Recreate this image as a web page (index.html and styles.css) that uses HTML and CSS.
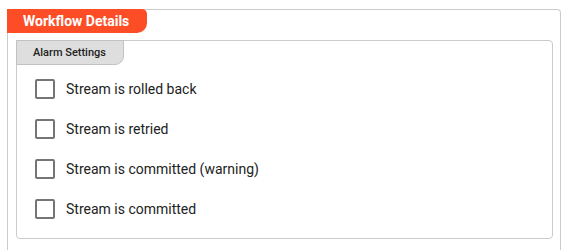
FILE: index.html
```html
<!DOCTYPE html>
<html>
<head>
<meta charset="utf-8">
<link rel="stylesheet" href="styles.css">
</head>
<body>
<div class="panel">
  <div class="panel-tab">Workflow Details</div>
  <div class="group">
    <div class="group-tab">Alarm Settings</div>
    <ul class="checks">
      <li class="check"><span class="box"></span><span class="label">Stream is rolled back</span></li>
      <li class="check"><span class="box"></span><span class="label">Stream is retried</span></li>
      <li class="check"><span class="box"></span><span class="label">Stream is committed (warning)</span></li>
      <li class="check"><span class="box"></span><span class="label">Stream is committed</span></li>
    </ul>
  </div>
</div>
</body>
</html>
```
FILE: styles.css
```css
* { box-sizing: border-box; }
html, body { margin: 0; background: #fff; }
body {
  padding: 9px 6px 0 7px;
  font-family: Roboto, "Liberation Sans", Arial, sans-serif;
  color: #222;
}
.panel {
  border: 1px solid #cbcbcb;
  border-bottom: none;
  border-radius: 0 4px 0 0;
  height: 241px;
}
.panel-tab {
  margin: -1px 0 0 -1px;
  width: 140px;
  height: 24px;
  background: #fc4d26;
  color: #fff;
  font-weight: 700;
  font-size: 14px;
  line-height: 24px;
  padding-left: 16px;
  border-radius: 0 5px 10px 0;
}
.group {
  margin: 7px 7px 0 8px;
  border: 1px solid #cbcbcb;
  border-radius: 0 4px 4px 4px;
  height: 199px;
}
.group-tab {
  margin: -1px 0 0 -1px;
  width: 108px;
  height: 25px;
  background: #dedede;
  border: 1px solid #c2c2c2;
  border-radius: 0 0 9px 0;
  font-size: 11px;
  font-weight: 500;
  line-height: 23px;
  padding-left: 16px;
  color: #222;
}
.checks {
  list-style: none;
  margin: 0;
  padding: 4px 0 0 18px;
}
.check {
  display: flex;
  align-items: center;
  height: 40px;
}
.box {
  width: 20px;
  height: 20px;
  border: 2px solid #757575;
  border-radius: 2px;
  flex: none;
}
.label {
  margin-left: 11px;
  font-size: 14px;
  color: #222;
}
```
